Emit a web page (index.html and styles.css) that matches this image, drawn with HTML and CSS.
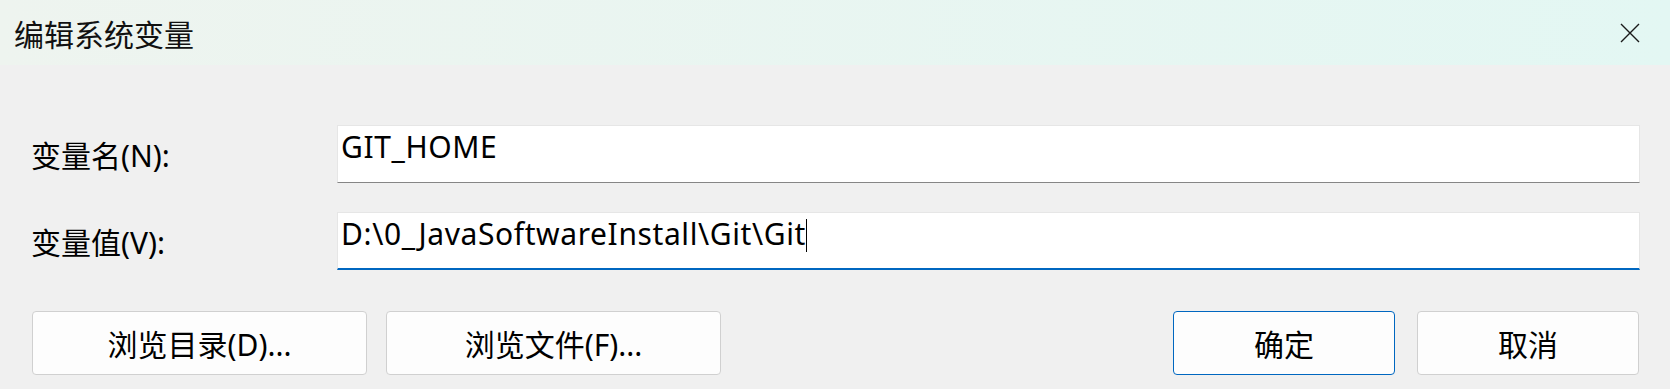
FILE: index.html
```html
<!DOCTYPE html>
<html lang="zh-CN">

<head>
    <meta charset="UTF-8">
    <meta name="viewport" content="width=device-width, initial-scale=1.0">
    <title>编辑系统变量</title>
    <link rel="stylesheet" href="styles.css">
</head>

<body>
    <div class="titlebar">
        <span class="title">编辑系统变量</span>
        <span class="close">
            <svg width="20" height="20" viewBox="0 0 20 20">
                <path d="M1 1 L19 19 M19 1 L1 19" stroke="#1a1a1a" stroke-width="1.4" fill="none" />
            </svg>
        </span>
    </div>

    <div class="fields">
        <label class="label">变量名(N):</label>
        <div class="field">GIT_HOME</div>

        <label class="label">变量值(V):</label>
        <div class="field focused">D:\0_JavaSoftwareInstall\Git\Git<span class="caret"></span></div>
    </div>

    <div class="buttons">
        <button class="btn wide">浏览目录(D)...</button>
        <button class="btn wide">浏览文件(F)...</button>
        <span class="spacer"></span>
        <button class="btn primary">确定</button>
        <button class="btn">取消</button>
    </div>
</body>

</html>
```

FILE: styles.css
```css
body {
    margin: 0;
    background: #f0f0f0;
    font-family: "Noto Sans", "Noto Sans CJK SC", sans-serif;
    font-size: 30px;
    color: #000;
}

.titlebar {
    height: 65px;
    display: flex;
    align-items: center;
    justify-content: space-between;
    padding: 0 30px 0 14px;
    background: linear-gradient(to right, #eef4ef, #e3f7f3);
}

.title {
    color: #111;
}

.close {
    display: flex;
    margin-top: 1px;
}

.fields {
    display: grid;
    grid-template-columns: 306px 1fr;
    align-items: center;
    row-gap: 29px;
    padding: 60px 30px 0 31px;
}

.field {
    height: 58px;
    box-sizing: border-box;
    background: #fff;
    border: 1px solid #e6e6e6;
    border-bottom: 1px solid #868686;
    padding: 1px 0 0 3px;
    line-height: 40px;
    letter-spacing: 0.6px;
    white-space: nowrap;
}

.field.focused {
    border-bottom: 2px solid #0067c0;
}

.caret {
    display: inline-block;
    width: 0;
    height: 33px;
    border-left: 1px solid #000;
    vertical-align: -7px;
}

.buttons {
    display: flex;
    gap: 19px;
    padding: 41px 31px 0 32px;
}

.spacer {
    flex: 1;
}

.btn {
    height: 64px;
    width: 222px;
    box-sizing: border-box;
    font: inherit;
    color: #000;
    background: #fdfdfd;
    border: 1px solid #d0d0d0;
    border-radius: 4px;
    padding: 0;
}

.btn.wide {
    width: 335px;
}

.btn.primary {
    border-color: #0067c0;
    margin-right: 3px;
}
```
